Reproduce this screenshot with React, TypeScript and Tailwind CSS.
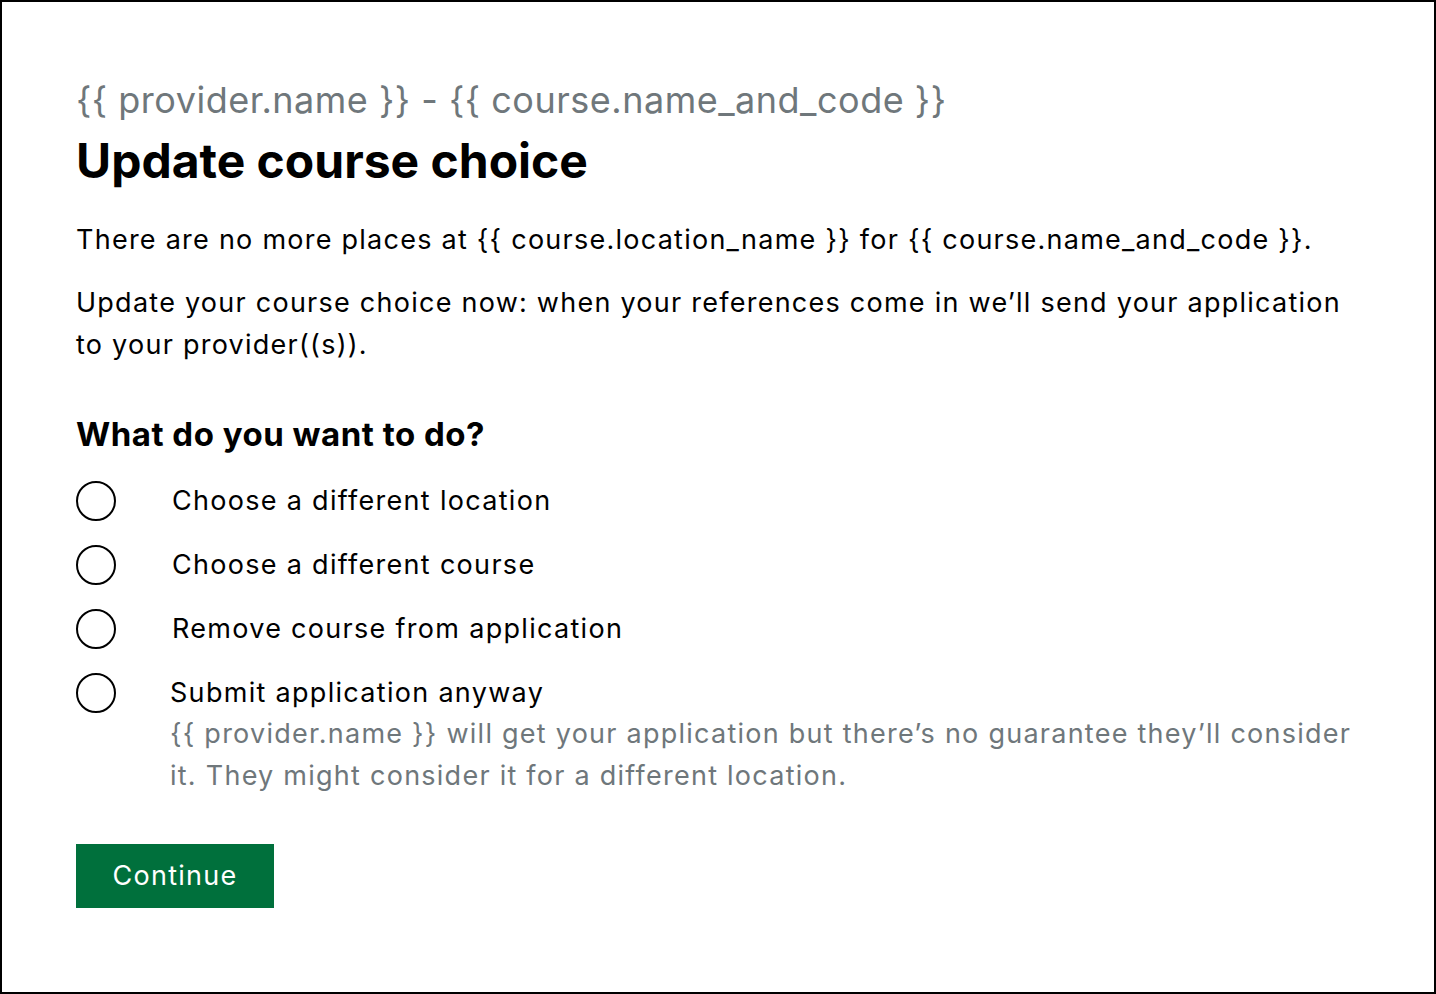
import React, { useState } from 'react';

const options = [
  { id: 'location', label: 'Choose a different location' },
  { id: 'course', label: 'Choose a different course' },
  { id: 'remove', label: 'Remove course from application' },
  {
    id: 'submit',
    label: 'Submit application anyway',
    hint: '{{ provider.name }} will get your application but there’s no guarantee they’ll consider it. They might consider it for a different location.',
  },
];

const App: React.FC = () => {
  const [choice, setChoice] = useState<string | null>(null);

  return (
    <div
      className="w-[1436px] h-[994px] border-2 border-black bg-white text-black"
      style={{ fontFamily: 'Inter, "Noto Sans", sans-serif' }}
    >
      <div className="pl-[74px] pr-[60px] pt-[74px]">
        <span className="block text-[36px] leading-[48px] tracking-[0.5px] text-[#6f777b]">
          {'{{ provider.name }} - {{ course.name_and_code }}'}
        </span>
        <h1 className="text-[48px] leading-[56px] font-bold mt-[9px]">Update course choice</h1>

        <p className="text-[27px] leading-[42px] tracking-[1.25px] mt-[30px]">
          {'There are no more places at {{ course.location_name }} for {{ course.name_and_code }}.'}
        </p>
        <p className="text-[27px] leading-[42px] tracking-[1.25px] mt-[21px] max-w-[1290px]">
          Update your course choice now: when your references come in we’ll send your application to your provider((s)).
        </p>

        <fieldset className="mt-[48px]">
          <legend className="text-[33px] leading-[40px] font-bold tracking-[0.5px]">What do you want to do?</legend>
          <div className="mt-[27px] flex flex-col">
            {options.map((o) => (
              <label key={o.id} className="flex items-start cursor-pointer mb-[24px]">
                <span className="w-[40px] h-[40px] shrink-0 rounded-full border-2 border-black flex items-center justify-center bg-white">
                  {choice === o.id && <span className="w-[20px] h-[20px] rounded-full bg-black" />}
                </span>
                <input
                  type="radio"
                  name="choice"
                  className="sr-only"
                  checked={choice === o.id}
                  onChange={() => setChoice(o.id)}
                />
                <span className={`${o.hint ? 'pl-[54px]' : 'pl-[56px]'} flex flex-col`}>
                  <span className="text-[27px] leading-[40px] tracking-[1.3px]">{o.label}</span>
                  {o.hint && (
                    <span className="text-[27px] leading-[42px] tracking-[1.25px] text-[#6f777b] max-w-[1195px]">{o.hint}</span>
                  )}
                </span>
              </label>
            ))}
          </div>
        </fieldset>

        <button className="mt-[23px] w-[198px] h-[64px] bg-[#00703c] text-white text-[27px] leading-[64px] tracking-[1.25px] text-center">
          Continue
        </button>
      </div>
    </div>
  );
};

export default App;
